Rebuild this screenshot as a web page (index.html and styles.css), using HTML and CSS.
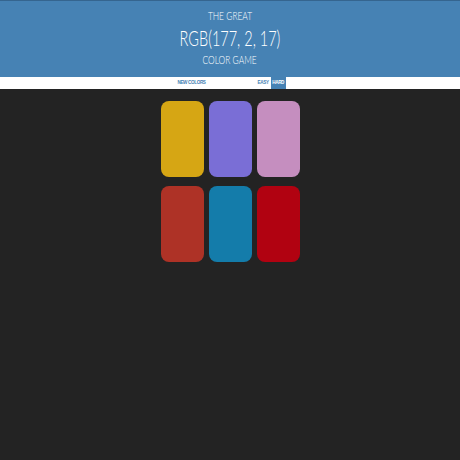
FILE: index.html
```html
<!DOCTYPE html>
<html lang="en">
<head>
<meta charset="utf-8">
<title>The Great RGB Color Game</title>
<link rel="stylesheet" href="styles.css">
</head>
<body>
<header class="hdr">
  <h1 class="title">
    <span class="line small"><span class="squeeze">THE GREAT</span></span>
    <span class="line big"><span class="squeeze">RGB(177, 2, 17)</span></span>
    <span class="line small"><span class="squeeze">COLOR GAME</span></span>
  </h1>
</header>
<nav class="bar">
  <button class="btn reset">NEW COLORS</button>
  <span class="message"></span>
  <button class="btn mode">EASY</button>
  <button class="btn mode selected">HARD</button>
</nav>
<main class="board">
  <div class="square c1"></div>
  <div class="square c2"></div>
  <div class="square c3"></div>
  <div class="square c4"></div>
  <div class="square c5"></div>
  <div class="square c6"></div>
</main>
</body>
</html>
```

FILE: styles.css
```css
* { box-sizing: border-box; }
html, body { margin: 0; padding: 0; }
body {
  background: #232323;
  font-family: Lato, "Open Sans", sans-serif;
  height: 460px;
}
.hdr {
  background: #4682b4;
  border-top: 1px solid #35658f;
  height: 77px;
  padding-top: 8px;
}
.title {
  margin: 0;
  color: #fff;
  font-weight: 300;
  text-align: center;
}
.line { display: block; }
.squeeze { display: inline-block; }
.small {
  font-size: 11px;
  line-height: 14px;
}
.small .squeeze { transform: scaleX(0.76); }
.big {
  font-size: 21px;
  line-height: 30px;
}
.big .squeeze { transform: scaleX(0.69); }
.bar {
  background: #fff;
  height: 12px;
  display: flex;
  justify-content: center;
  align-items: stretch;
}
.btn {
  border: none;
  background: none;
  margin: 0;
  font-family: "Liberation Sans", Arial, sans-serif;
  font-weight: bold;
  font-size: 4.6px;
  letter-spacing: -0.35px;
  color: #4682b4;
  padding: 0 3px;
  line-height: 12px;
  text-transform: uppercase;
}
.message { width: 47px; }
.mode { padding: 0 2px; }
.selected {
  background: #4682b4;
  color: #fff;
  padding: 0 1.5px;
}
.board {
  width: 139px;
  margin: 12px auto 0;
  display: grid;
  grid-template-columns: repeat(3, 43px);
  grid-auto-rows: 76px;
  column-gap: 5px;
  row-gap: 9px;
}
.square { border-radius: 8px; }
.c1 { background: rgb(214, 166, 20); }
.c2 { background: rgb(122, 110, 214); }
.c3 { background: rgb(197, 142, 191); }
.c4 { background: rgb(174, 50, 38); }
.c5 { background: rgb(20, 124, 170); }
.c6 { background: rgb(177, 2, 17); }
```
